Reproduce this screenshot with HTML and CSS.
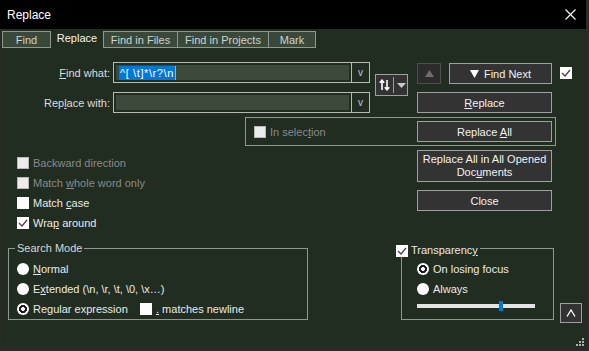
FILE: index.html
```html
<!DOCTYPE html>
<html lang="en">
<head>
    <meta charset="UTF-8">
    <title>Replace</title>
    <link rel="stylesheet" href="styles.css">
</head>
<body>
<div class="window">
    <div class="titlebar">
        <span class="title">Replace</span>
        <svg class="close" width="11" height="11" viewBox="0 0 11 11"><path d="M0.5 0.5L10.5 10.5M10.5 0.5L0.5 10.5" stroke="#fff" stroke-width="1.1"/></svg>
    </div>
    <div class="dialog">
        <div class="tabs">
            <div class="tab tab-find">Find</div>
            <div class="tab tab-replace active">Replace</div>
            <div class="tab tab-files">Find in Files</div>
            <div class="tab tab-projects">Find in Projects</div>
            <div class="tab tab-mark">Mark</div>
        </div>

        <div class="top">
            <div class="fields">
                <div class="field">
                    <label class="field-label"><u>F</u>ind what:</label>
                    <div class="combo">
                        <div class="combo-text"><span class="selected">^[ \t]*\r?\n</span><span class="caret"></span></div>
                        <div class="combo-btn">v</div>
                    </div>
                </div>
                <div class="field">
                    <label class="field-label">Rep<u>l</u>ace with:</label>
                    <div class="combo">
                        <div class="combo-text"></div>
                        <div class="combo-btn">v</div>
                    </div>
                </div>
            </div>
            <div class="swap">
                <svg width="11" height="12" viewBox="0 0 11 12">
                    <path d="M3 11V1.5M0.8 3.8L3 1.2L5.2 3.8" stroke="#fff" stroke-width="1.6" fill="none"/>
                    <path d="M8 1V10.5M5.8 8.2L8 10.8L10.2 8.2" stroke="#fff" stroke-width="1.6" fill="none"/>
                </svg>
                <span class="swap-sep"></span>
                <svg width="9" height="5" viewBox="0 0 9 5"><path d="M0 0H9L4.5 5Z" fill="#c8c8c8"/></svg>
            </div>
            <div class="actions">
                <div class="find-row">
                    <div class="btn btn-up"><svg width="9" height="7" viewBox="0 0 9 7"><path d="M0 7H9L4.5 0Z" fill="#6f6f6f"/></svg></div>
                    <div class="btn btn-next"><svg width="9" height="8" viewBox="0 0 9 8"><path d="M0 0H9L4.5 8Z" fill="#fff"/></svg><span>Find Next</span></div>
                </div>
                <div class="btn"><span><u>R</u>eplace</span></div>
            </div>
            <span class="cb checked top-check"><svg width="12" height="12" viewBox="0 0 12 12"><path d="M2 6L5 9L10 3" stroke="#444" stroke-width="1.3" fill="none"/></svg></span>
        </div>

        <div class="selection-box">
            <label class="opt disabled"><span class="cb dim"></span><span>In selec<u>t</u>ion</span></label>
            <div class="btn"><span>Replace <u>A</u>ll</span></div>
        </div>

        <div class="middle">
            <div class="options">
                <label class="opt disabled"><span class="cb dim"></span><span>Backward direction</span></label>
                <label class="opt disabled"><span class="cb dim"></span><span>Match <u>w</u>hole word only</span></label>
                <label class="opt"><span class="cb"></span><span>Match <u>c</u>ase</span></label>
                <label class="opt"><span class="cb checked"><svg width="12" height="12" viewBox="0 0 12 12"><path d="M2 6L5 9L10 3" stroke="#444" stroke-width="1.3" fill="none"/></svg></span><span>Wra<u>p</u> around</span></label>
            </div>
            <div class="side-buttons">
                <div class="btn btn-tall"><span>Replace All in All Opened<br>Doc<u>u</u>ments</span></div>
                <div class="btn"><span>Close</span></div>
            </div>
        </div>

        <div class="bottom">
            <div class="group search-mode">
                <span class="group-title">Search Mode</span>
                <label class="opt"><span class="radio"></span><span><u>N</u>ormal</span></label>
                <label class="opt"><span class="radio"></span><span>E<u>x</u>tended (\n, \r, \t, \0, \x…)</span></label>
                <div class="opt-row">
                    <label class="opt regex"><span class="radio on"></span><span>Re<u>g</u>ular expression</span></label>
                    <label class="opt"><span class="cb"></span><span><u>.</u> matches newline</span></label>
                </div>
            </div>
            <div class="group transparency">
                <label class="group-title legend-check"><span class="cb checked"><svg width="12" height="12" viewBox="0 0 12 12"><path d="M2 6L5 9L10 3" stroke="#444" stroke-width="1.3" fill="none"/></svg></span><span>Transparenc<u>y</u></span></label>
                <label class="opt"><span class="radio on"></span><span>On losing focus</span></label>
                <label class="opt"><span class="radio"></span><span>Always</span></label>
                <div class="slider"><span class="thumb"></span></div>
            </div>
            <div class="btn btn-collapse"><svg width="10" height="8" viewBox="0 0 10 8"><path d="M1 7.5L5 1L9 7.5" stroke="#fff" stroke-width="1.3" fill="none"/></svg></div>
        </div>

        <svg class="grip" width="9" height="9" viewBox="0 0 9 9" fill="#b0b0b0">
            <rect x="6" y="0" width="2" height="2"/>
            <rect x="3" y="3" width="2" height="2"/><rect x="6" y="3" width="2" height="2"/>
            <rect x="0" y="6" width="2" height="2"/><rect x="3" y="6" width="2" height="2"/><rect x="6" y="6" width="2" height="2"/>
        </svg>
    </div>
</div>
</body>
</html>
```

FILE: styles.css
```css
body {
    margin: 0;
    background: #2b2b2b;
    font-family: "Liberation Sans", Arial, sans-serif;
    font-size: 11px;
    color: #e4e4e4;
}
.window {
    width: 586px;
    height: 348px;
    display: flex;
    flex-direction: column;
    overflow: hidden;
}
.titlebar {
    height: 29px;
    flex: none;
    background: #000;
    display: flex;
    align-items: center;
    justify-content: space-between;
    padding: 0 10px 0 7px;
}
.title {
    font-size: 12px;
    color: #fff;
}
.dialog {
    position: relative;
    flex: 1;
    background: #212d21;
    box-shadow: inset 1px 0 0 #2b2b2b;
}

/* tabs */
.tabs {
    display: flex;
    padding: 2px 0 0 2px;
}
.tab {
    height: 17px;
    box-sizing: border-box;
    border: 1px solid #8e988e;
    background: #3a483a;
    color: #cdd3cd;
    display: flex;
    align-items: center;
    justify-content: center;
}
.tab-find { width: 49px; }
.tab-replace { width: 50px; margin-left: 1px; }
.tab-files { width: 75px; margin-left: 1px; }
.tab-projects { width: 91px; border-left: none; }
.tab-mark { width: 47px; border-left: none; }
.tab.active {
    border: none;
    background: transparent;
    color: #f4f4f4;
    padding-bottom: 3px;
}

/* find / replace fields */
.top {
    display: flex;
    margin-top: 14px;
}
.fields {
    display: flex;
    flex-direction: column;
    gap: 9px;
}
.field {
    display: flex;
    align-items: center;
    height: 21px;
}
.field-label {
    width: 113px;
    padding-right: 3px;
    box-sizing: border-box;
    text-align: right;
    color: #dcdcdc;
}
.combo {
    width: 257px;
    height: 21px;
    box-sizing: border-box;
    border: 1px solid #b3bbb3;
    display: flex;
}
.combo-text {
    flex: 1;
    margin: 2px;
    background: #3b4a3b;
    display: flex;
    align-items: center;
    padding-left: 3px;
}
.selected {
    background: #0078d7;
    color: #fff;
    padding: 0 1px;
    line-height: 14px;
    letter-spacing: 0.6px;
}
.caret {
    width: 1px;
    height: 14px;
    background: #f0a030;
}
.combo-btn {
    width: 17px;
    border-left: 1px solid #b3bbb3;
    color: #c8c8c8;
    font-size: 10px;
    display: flex;
    align-items: center;
    justify-content: center;
}
.swap {
    width: 33px;
    height: 22px;
    box-sizing: border-box;
    margin: 12px 0 0 5px;
    border: 1px solid #a0a0a0;
    background: #333;
    display: flex;
    align-items: center;
    padding-left: 3px;
    gap: 3px;
}
.swap-sep {
    width: 1px;
    height: 16px;
    background: #9a9a9a;
}

/* buttons */
.btn {
    height: 21px;
    box-sizing: border-box;
    border: 1px solid #a0a0a0;
    background: #333;
    color: #f2f2f2;
    display: flex;
    align-items: center;
    justify-content: center;
    gap: 5px;
}
.actions {
    margin: 1px 0 0 9px;
    width: 135px;
    display: flex;
    flex-direction: column;
    gap: 8px;
}
.find-row {
    display: flex;
    gap: 8px;
}
.btn-up {
    width: 24px;
    background: #2c2c2c;
    border-color: #4e4e4e;
}
.btn-next {
    flex: 1;
}
.top-check {
    margin: 5px 0 0 8px;
}

/* checkboxes, radios */
.cb {
    width: 12px;
    height: 12px;
    flex: none;
    box-sizing: border-box;
    background: #fff;
    margin-right: 4px;
    display: inline-flex;
}
.cb.dim {
    background: #ececec;
    border: 1px solid #b8b8b8;
}
.radio {
    width: 12px;
    height: 12px;
    flex: none;
    border-radius: 50%;
    background: #fff;
    margin-right: 4px;
}
.radio.on {
    background: radial-gradient(circle, #fff 0 1.6px, #1e1e1e 2.2px 3.8px, #fff 4.3px);
}
.opt {
    display: flex;
    align-items: center;
    height: 20px;
    color: #eaeaea;
}
.opt.disabled {
    color: #8a8a8a;
}

.selection-box {
    margin: 4px 0 0 245px;
    width: 311px;
    height: 29px;
    box-sizing: border-box;
    border: 1px solid #8e988e;
    display: flex;
    align-items: center;
    justify-content: space-between;
    padding: 0 3px 0 8px;
}
.selection-box .btn {
    width: 135px;
}

.middle {
    display: flex;
    margin-top: 4px;
    height: 98px;
}
.options {
    padding: 3px 0 0 17px;
}
.side-buttons {
    margin: 0 34px 0 auto;
    width: 135px;
    display: flex;
    flex-direction: column;
    gap: 8px;
}
.btn-tall {
    height: 32px;
    text-align: center;
    line-height: 13px;
}

/* group boxes */
.bottom {
    display: flex;
    align-items: flex-start;
}
.group {
    position: relative;
    height: 72px;
    box-sizing: border-box;
    border: 1px solid #8e988e;
    padding-top: 10px;
}
.group-title {
    position: absolute;
    top: -7px;
    left: 6px;
    padding: 0 2px;
    background: #212d21;
    color: #d8d8d8;
    line-height: 13px;
}
.search-mode {
    margin-left: 8px;
    width: 300px;
    padding-left: 8px;
}
.opt-row {
    display: flex;
}
.regex {
    width: 123px;
}
.transparency {
    margin-left: 93px;
    width: 153px;
    padding-left: 15px;
}
.legend-check {
    display: flex;
    align-items: center;
    top: -5px;
    left: -6px;
    padding: 0 2px 0 0;
    color: #eaeaea;
}
.legend-check .cb {
    margin-right: 3px;
}
.slider {
    position: relative;
    width: 118px;
    height: 10px;
    margin-top: 2px;
}
.slider::before {
    content: "";
    position: absolute;
    left: 0;
    right: 0;
    top: 3px;
    height: 4px;
    background: #e4e4e4;
}
.thumb {
    position: absolute;
    left: 82px;
    top: 0;
    width: 4px;
    height: 10px;
    background: #0078d7;
}
.btn-collapse {
    width: 22px;
    height: 20px;
    margin: 55px 0 0 6px;
}
.grip {
    position: absolute;
    right: 1px;
    bottom: 1px;
}
```
